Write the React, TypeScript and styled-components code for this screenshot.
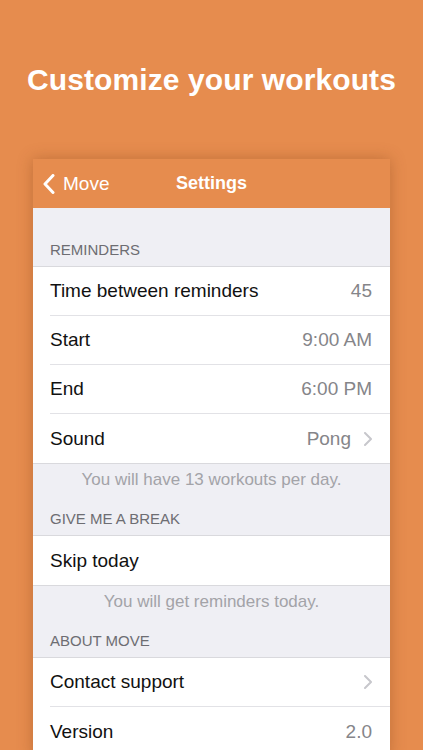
import styled, { createGlobalStyle } from 'styled-components';

const GlobalStyle = createGlobalStyle`
  html, body {
    margin: 0;
    padding: 0;
    background: #e68c4e;
  }
  body {
    font-family: 'Liberation Sans', Arial, sans-serif;
    -webkit-font-smoothing: antialiased;
  }
`;

const Page = styled.div`
  width: 423px;
  height: 750px;
  overflow: hidden;
  background: #e68c4e;
  display: flex;
  flex-direction: column;
  align-items: center;
`;

const Headline = styled.h1`
  margin: 62px 0 0;
  font-size: 30px;
  line-height: 36px;
  font-weight: 700;
  color: #ffffff;
  letter-spacing: 0.1px;
  text-align: center;
`;

const Phone = styled.div`
  margin-top: 61px;
  width: 357px;
  background: #efeff4;
  box-shadow: 0 0 14px rgba(120, 60, 20, 0.35);
  display: flex;
  flex-direction: column;
`;

const NavBar = styled.div`
  position: relative;
  height: 49px;
  background: #e68c4e;
  display: flex;
  align-items: center;
  justify-content: center;
  color: #ffffff;
`;

const BackButton = styled.div`
  position: absolute;
  left: 10px;
  top: 0;
  bottom: 0;
  display: flex;
  align-items: center;
  gap: 8px;
  font-size: 19px;
`;

const NavTitle = styled.div`
  font-size: 18px;
  font-weight: 700;
`;

const GroupHeader = styled.div<{ $first?: boolean }>`
  padding: ${p => (p.$first ? '34px' : '22px')} 17px 8px;
  font-size: 15px;
  line-height: 16px;
  color: #6d6d72;
  text-transform: uppercase;
`;

const Group = styled.div`
  background: #ffffff;
  border-top: 1px solid #d9d9dd;
  border-bottom: 1px solid #d9d9dd;
`;

const Row = styled.div`
  height: 49px;
  margin-left: 17px;
  padding-right: 18px;
  display: flex;
  align-items: center;
  justify-content: space-between;
  box-sizing: border-box;
  border-bottom: 1px solid #e2e2e6;
  &:last-child {
    border-bottom: none;
  }
`;

const Label = styled.span`
  font-size: 19px;
  color: #111111;
`;

const Value = styled.span`
  display: flex;
  align-items: center;
  gap: 13px;
  font-size: 19px;
  color: #858589;
`;

const Footer = styled.div`
  padding: 6px 17px 0;
  font-size: 17px;
  line-height: 19px;
  color: #a3a3a8;
  text-align: center;
`;

function Chevron() {
  return (
    <svg width="8" height="14" viewBox="0 0 8 14" fill="none">
      <path d="M1 1l6 6-6 6" stroke="#c7c7cc" strokeWidth="2" strokeLinecap="round" strokeLinejoin="round" />
    </svg>
  );
}

function BackChevron() {
  return (
    <svg width="12" height="20" viewBox="0 0 12 20" fill="none">
      <path d="M10 1.5L2 10l8 8.5" stroke="#ffffff" strokeWidth="3" strokeLinecap="round" strokeLinejoin="round" />
    </svg>
  );
}

export default function App() {
  return (
    <Page>
      <GlobalStyle />
      <Headline>Customize your workouts</Headline>
      <Phone>
        <NavBar>
          <BackButton>
            <BackChevron />
            <span>Move</span>
          </BackButton>
          <NavTitle>Settings</NavTitle>
        </NavBar>

        <GroupHeader $first>Reminders</GroupHeader>
        <Group>
          <Row>
            <Label>Time between reminders</Label>
            <Value>45</Value>
          </Row>
          <Row>
            <Label>Start</Label>
            <Value>9:00 AM</Value>
          </Row>
          <Row>
            <Label>End</Label>
            <Value>6:00 PM</Value>
          </Row>
          <Row>
            <Label>Sound</Label>
            <Value>
              Pong
              <Chevron />
            </Value>
          </Row>
        </Group>
        <Footer>You will have 13 workouts per day.</Footer>

        <GroupHeader>Give me a break</GroupHeader>
        <Group>
          <Row>
            <Label>Skip today</Label>
          </Row>
        </Group>
        <Footer>You will get reminders today.</Footer>

        <GroupHeader>About Move</GroupHeader>
        <Group>
          <Row>
            <Label>Contact support</Label>
            <Value>
              <Chevron />
            </Value>
          </Row>
          <Row>
            <Label>Version</Label>
            <Value>2.0</Value>
          </Row>
        </Group>
      </Phone>
    </Page>
  );
}
